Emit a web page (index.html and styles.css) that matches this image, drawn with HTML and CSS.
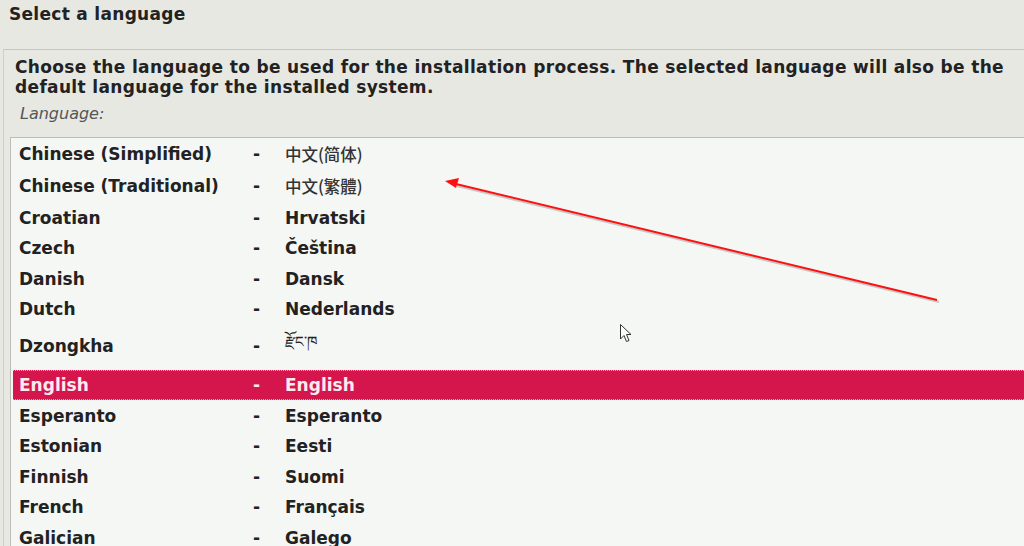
FILE: index.html
```html
<!doctype html>
<html lang="en">
  <head>
    <meta charset="utf-8">
    <meta name="viewport" content="width=device-width, initial-scale=1">
    <title>Select a language</title>
    <link rel="stylesheet" href="styles.css">
  </head>
  <body>
    <div class="heading">
      <h1>Select a language</h1>
    </div>

    <div class="panel">
      <p class="desc">Choose the language to be used for the installation process. The selected language will also be the default language for the installed system.</p>
      <div class="label">Language:</div>

      <div class="listbox">
        <div class="row tall"><span>Chinese (Simplified)</span><span>-</span><span class="cjk" lang="zh-CN">中文(简体)</span></div>
        <div class="row tall"><span>Chinese (Traditional)</span><span>-</span><span class="cjk" lang="zh-TW">中文(繁體)</span></div>
        <div class="row"><span>Croatian</span><span>-</span><span>Hrvatski</span></div>
        <div class="row"><span>Czech</span><span>-</span><span>Čeština</span></div>
        <div class="row"><span>Danish</span><span>-</span><span>Dansk</span></div>
        <div class="row"><span>Dutch</span><span>-</span><span>Nederlands</span></div>
        <div class="row taller"><span>Dzongkha</span><span>-</span><span class="tib" lang="dz">རྫོང་ཁ</span></div>
        <div class="row selected"><span>English</span><span>-</span><span>English</span></div>
        <div class="row"><span>Esperanto</span><span>-</span><span>Esperanto</span></div>
        <div class="row"><span>Estonian</span><span>-</span><span>Eesti</span></div>
        <div class="row"><span>Finnish</span><span>-</span><span>Suomi</span></div>
        <div class="row"><span>French</span><span>-</span><span>Français</span></div>
        <div class="row"><span>Galician</span><span>-</span><span>Galego</span></div>
      </div>
    </div>

    <!-- annotation drawn over the screenshot -->
    <svg class="annotation" width="1024" height="546" viewBox="0 0 1024 546">
      <line x1="938" y1="301" x2="456" y2="185" stroke="#9a9a9a" stroke-width="2" opacity="0.5" transform="translate(1 1)"/>
      <line x1="937" y1="300" x2="456" y2="184" stroke="#ff1010" stroke-width="2"/>
      <polygon points="445,181 459,178 456,188" fill="#ff1010"/>
    </svg>

    <svg class="cursor" width="14" height="22" viewBox="0 0 14 22">
      <path d="M1.5 1.5 L1.5 16 L5 12.5 L7.5 18.5 L10 17.5 L7.5 11.5 L12 11.5 Z" fill="#fff" stroke="#333" stroke-width="1"/>
    </svg>
  </body>
</html>
```

FILE: styles.css
```css
/* Reset */
* {
  margin: 0;
  padding: 0;
  box-sizing: border-box;
}

body {
  width: 1024px;
  height: 546px;
  overflow: hidden;
  position: relative;
  background-color: #e8e8e3;
  color: #222;
  font-family: "DejaVu Sans", "Noto Sans CJK SC", sans-serif;
}

/* Heading */
.heading {
  height: 49px;
  padding: 4px 9px 0;
}

.heading h1 {
  font-size: 17px;
  line-height: 20px;
  font-weight: bold;
  letter-spacing: 0.3px;
}

/* Panel with the question */
.panel {
  margin-left: 3px;
  padding: 7px 0 0 6px;
  border-top: 1px solid #c6c6c0;
  border-left: 1px solid #cfcfc9;
}

.desc {
  padding-left: 5px;
  padding-right: 6px;
  font-size: 17px;
  line-height: 20px;
  font-weight: bold;
  letter-spacing: 0.34px;
}

.label {
  margin-top: 7px;
  padding-left: 10px;
  font-size: 16px;
  line-height: 20px;
  font-style: italic;
  color: #555;
}

/* List of languages */
.listbox {
  margin-top: 13px;
  padding: 0 0 0 2px;
  background-color: #f5f7f4;
  border-top: 1px solid #bdbdb7;
  border-left: 1px solid #bdbdb7;
}

.row {
  display: grid;
  grid-template-columns: 234px 32px 1fr;
  align-items: center;
  height: 30.6px;
  padding-left: 6px;
  font-size: 17px;
  font-weight: bold;
}

.row.tall {
  height: 32.2px;
}

.row.taller {
  height: 45px;
  padding-bottom: 3px;
}

.row.selected {
  background-color: #d5164c;
  color: #fbeaf0;
  border-top: 1px dotted #ef9db6;
  border-bottom: 1px dotted #ef9db6;
}

.cjk {
  font-family: "Noto Sans CJK SC", sans-serif;
  font-weight: 500;
  font-size: 16.5px;
  color: #333;
}

.cjk:lang(zh-TW) {
  font-family: "Noto Sans CJK TC", sans-serif;
}

.tib {
  font-weight: normal;
  font-size: 15px;
}

/* Overlays */
.annotation {
  position: absolute;
  left: 0;
  top: 0;
  pointer-events: none;
}

.cursor {
  position: absolute;
  left: 619px;
  top: 323px;
}
```
